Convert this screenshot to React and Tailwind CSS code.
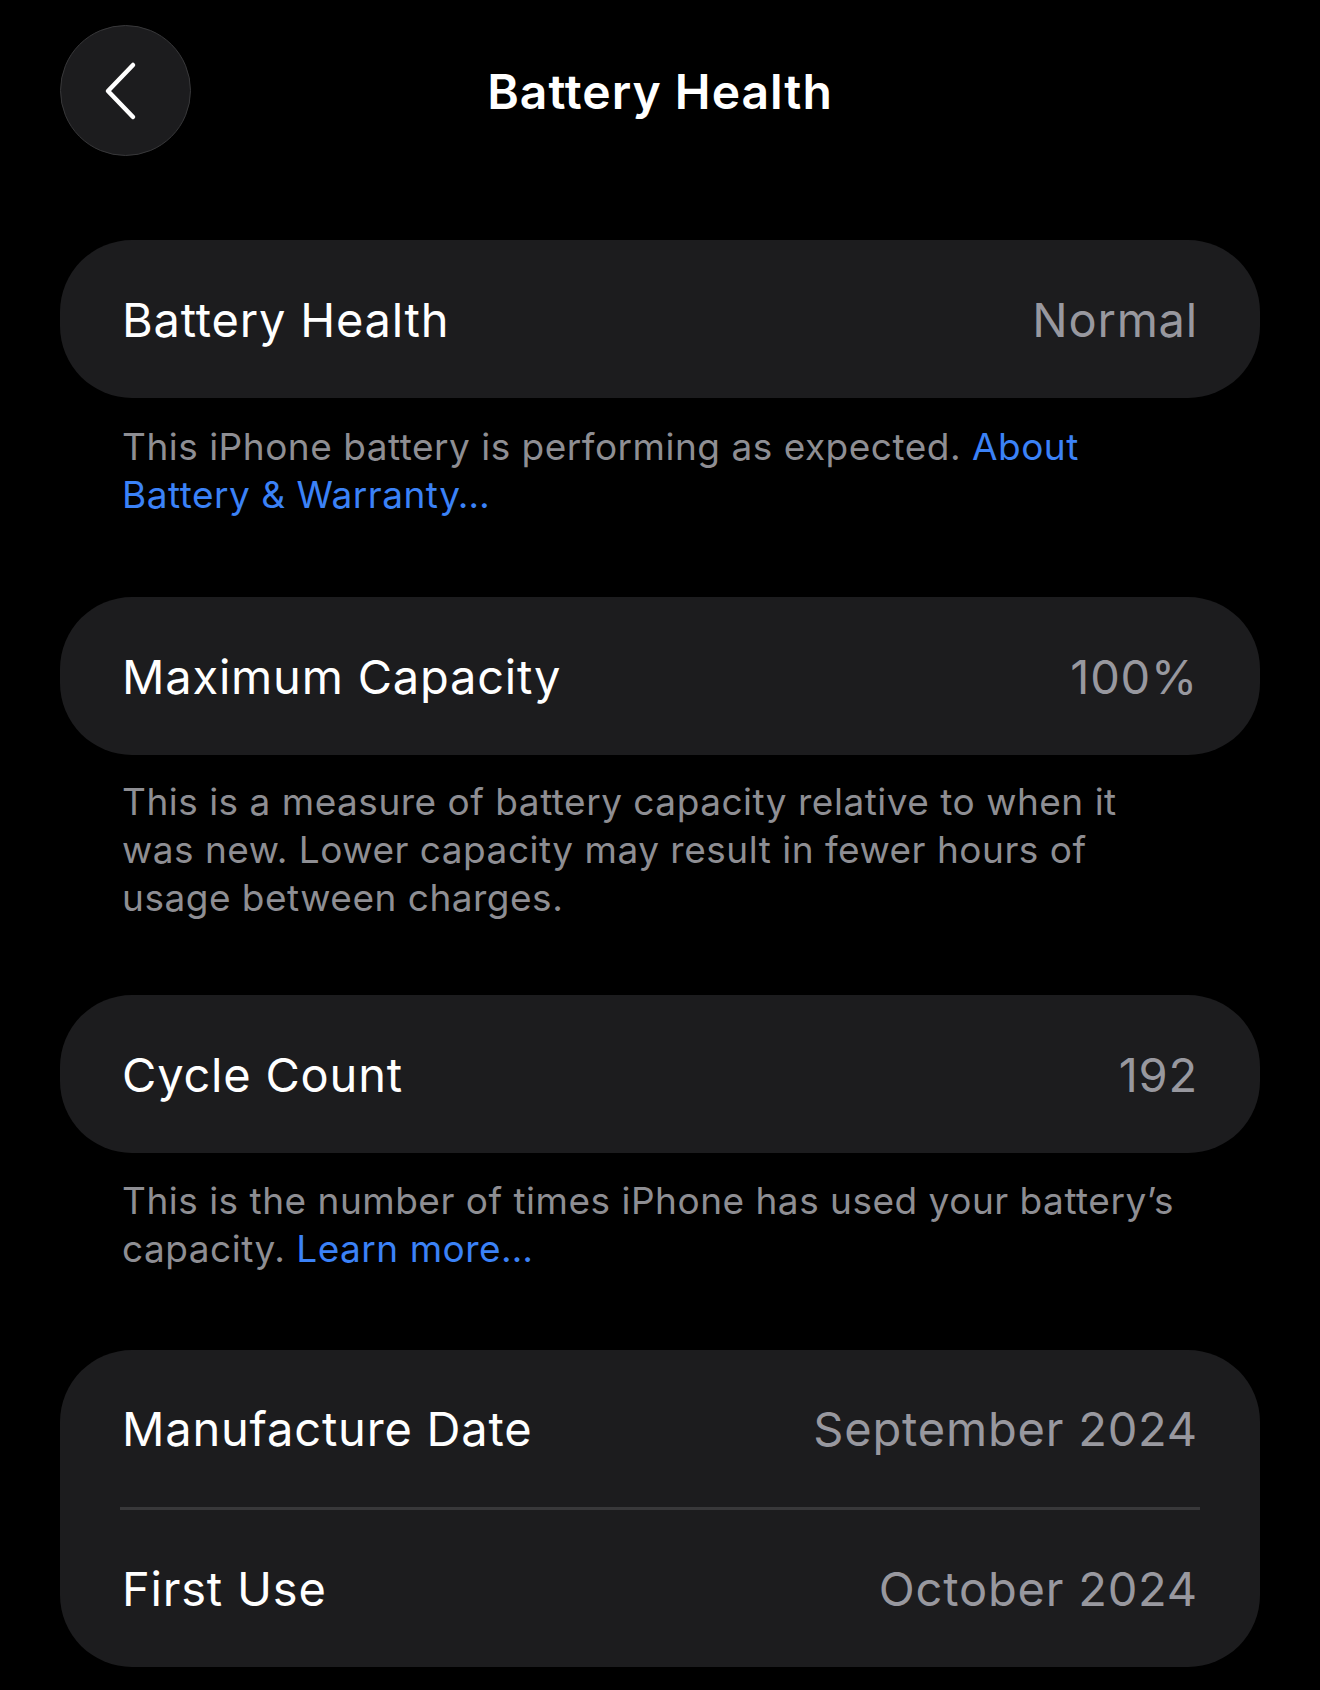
import React from 'react'

const font = { fontFamily: 'Inter, "Noto Sans", sans-serif' }

const BackButton = () => (
  <button className="flex h-[131px] w-[131px] items-center justify-center rounded-full border-[1.5px] border-[#38383a] bg-[#1c1c1e]">
    <svg width="40" height="60" viewBox="0 0 40 60" fill="none" className="-ml-[8px]">
      <polyline
        points="31,4 6,30 31,56"
        stroke="#ffffff"
        strokeWidth="4.5"
        strokeLinecap="round"
        strokeLinejoin="round"
      />
    </svg>
  </button>
)

const Row = ({ label, value, h = 'h-[158px]' }) => (
  <div className={`flex ${h} items-center justify-between px-[62px] text-[47px] leading-none tracking-[0.8px]`}>
    <span className="text-white">{label}</span>
    <span className="text-[#98989f]">{value}</span>
  </div>
)

const Card = ({ children }) => (
  <div className="overflow-hidden rounded-[72px] bg-[#1c1c1e]">{children}</div>
)

const Note = ({ children, mt = 'mt-[25px]' }) => (
  <p className={`${mt} px-[62px] text-[37px] leading-[48px] tracking-[0.5px] text-[#8e8e93]`}>
    {children}
  </p>
)

const Link = ({ children }) => <span className="text-[#3b82f7]">{children}</span>

export default function App() {
  return (
    <div className="min-h-[1690px] w-[1320px] bg-black px-[60px]" style={font}>
      {/* header */}
      <div className="relative flex h-[182px] items-start pt-[25px]">
        <BackButton />
        <h1 className="absolute left-0 right-0 top-[60px] text-center text-[48px] font-semibold leading-[64px] tracking-[1px] text-white">
          Battery Health
        </h1>
      </div>

      <div className="mt-[58px]">
        <Card>
          <Row label="Battery Health" value="Normal" />
        </Card>
        <Note>
          This iPhone battery is performing as expected. <Link>About Battery &amp; Warranty…</Link>
        </Note>
      </div>

      <div className="mt-[78px]">
        <Card>
          <Row label="Maximum Capacity" value="100%" />
        </Card>
        <Note mt="mt-[23px]">
          This is a measure of battery capacity relative to when it was new. Lower capacity may
          result in fewer hours of usage between charges.
        </Note>
      </div>

      <div className="mt-[73px]">
        <Card>
          <Row label="Cycle Count" value="192" />
        </Card>
        <Note mt="mt-[24px]">
          This is the number of times iPhone has used your battery’s capacity.{' '}
          <Link>Learn more…</Link>
        </Note>
      </div>

      <div className="mt-[77px]">
        <Card>
          <Row label="Manufacture Date" value="September 2024" h="h-[157px]" />
          <div className="mx-[60px] h-[3px] bg-[#38383a]" />
          <Row label="First Use" value="October 2024" h="h-[157px]" />
        </Card>
      </div>
    </div>
  )
}
